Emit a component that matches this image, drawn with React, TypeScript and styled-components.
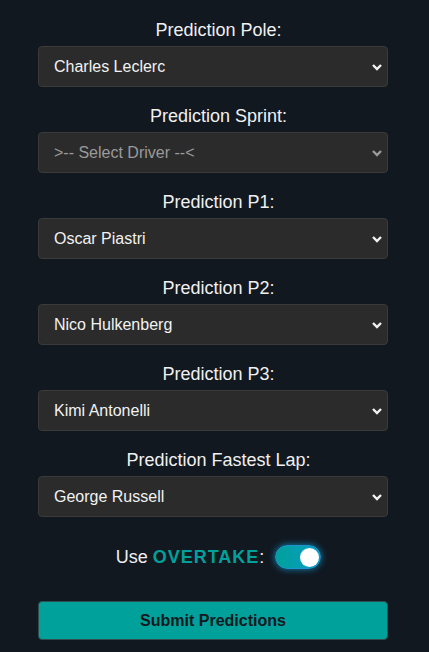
import React, { useState } from 'react';
import styled, { createGlobalStyle } from 'styled-components';

const GlobalStyle = createGlobalStyle`
  html, body {
    margin: 0;
    padding: 0;
    background-color: #111820;
    font-family: "Liberation Sans", Arial, sans-serif;
  }
`;

const Page = styled.div`
  min-height: 652px;
  box-sizing: border-box;
  padding: 20px 0 0 38px;
  background-color: #111820;
`;

const Form = styled.form`
  width: 361px;
  display: flex;
  flex-direction: column;
`;

const Group = styled.div`
  display: flex;
  flex-direction: column;
  margin-bottom: 19px;
`;

const Label = styled.label`
  display: block;
  text-align: center;
  font-size: 18px;
  line-height: 21px;
  color: #f0f0f0;
  margin-bottom: 5px;
`;

const SelectWrap = styled.div`
  position: relative;
  width: 350px;
`;

const Select = styled.select<{ $empty?: boolean }>`
  appearance: none;
  -webkit-appearance: none;
  width: 100%;
  height: 41px;
  box-sizing: border-box;
  padding: 0 15px;
  background-color: #2b2b2b;
  border: 1px solid #3a3a3a;
  border-radius: 4px;
  color: ${(p) => (p.$empty ? '#9a9a9a' : '#f2f2f2')};
  font-family: "Liberation Sans", Arial, sans-serif;
  font-size: 16px;
  outline: none;
`;

const Chevron = styled.svg`
  position: absolute;
  right: 5px;
  top: 50%;
  transform: translateY(-50%);
  pointer-events: none;
`;

const ToggleRow = styled.div`
  display: flex;
  align-items: center;
  justify-content: center;
  gap: 11px;
  margin-top: 9px;
  height: 24px;
`;

const ToggleText = styled.span`
  font-size: 18px;
  color: #f0f0f0;
`;

const Accent = styled.span`
  color: #00a19a;
  font-weight: bold;
  letter-spacing: 1px;
`;

const Track = styled.button<{ $on: boolean }>`
  position: relative;
  width: 46px;
  height: 24px;
  padding: 0;
  border: 1px solid #1b94cf;
  border-radius: 12px;
  background: ${(p) =>
    p.$on ? 'linear-gradient(90deg, #00a19a, #0a9cc6)' : '#444'};
  box-shadow: ${(p) => (p.$on ? '0 0 7px rgba(20, 170, 230, 0.75)' : 'none')};
  cursor: pointer;
`;

const Knob = styled.span<{ $on: boolean }>`
  position: absolute;
  top: 2px;
  left: ${(p) => (p.$on ? '24px' : '2px')};
  width: 19px;
  height: 19px;
  border-radius: 50%;
  background: #ffffff;
`;

const SubmitButton = styled.button`
  margin-top: 32px;
  width: 350px;
  height: 39px;
  background-color: #00a19a;
  border: 1px solid #2f4d4c;
  border-radius: 4px;
  color: #111820;
  font-family: "Liberation Sans", Arial, sans-serif;
  font-size: 16px;
  font-weight: bold;
  cursor: pointer;
`;

const drivers = [
  'Max Verstappen',
  'Lando Norris',
  'Oscar Piastri',
  'Charles Leclerc',
  'Lewis Hamilton',
  'George Russell',
  'Kimi Antonelli',
  'Nico Hulkenberg',
  'Fernando Alonso',
];

const fields = [
  { id: 'pole', label: 'Prediction Pole:', value: 'Charles Leclerc' },
  { id: 'sprint', label: 'Prediction Sprint:', value: '' },
  { id: 'p1', label: 'Prediction P1:', value: 'Oscar Piastri' },
  { id: 'p2', label: 'Prediction P2:', value: 'Nico Hulkenberg' },
  { id: 'p3', label: 'Prediction P3:', value: 'Kimi Antonelli' },
  { id: 'fastest', label: 'Prediction Fastest Lap:', value: 'George Russell' },
];

const DriverSelect: React.FC<{ id: string; initial: string }> = ({ id, initial }) => {
  const [value, setValue] = useState(initial);
  return (
    <SelectWrap>
      <Select id={id} value={value} $empty={!value} onChange={(e) => setValue(e.target.value)}>
        <option value="">&gt;-- Select Driver --&lt;</option>
        {drivers.map((d) => (
          <option key={d} value={d}>
            {d}
          </option>
        ))}
      </Select>
      <Chevron width="12" height="12" viewBox="0 0 12 12">
        <path d="M2 4 L6 8 L10 4" fill="none" stroke={value ? '#f2f2f2' : '#9a9a9a'} strokeWidth="2.4" />
      </Chevron>
    </SelectWrap>
  );
};

const App: React.FC = () => {
  const [overtake, setOvertake] = useState(true);

  return (
    <Page>
      <GlobalStyle />
      <Form onSubmit={(e) => e.preventDefault()}>
        {fields.map((f) => (
          <Group key={f.id}>
            <Label htmlFor={f.id}>{f.label}</Label>
            <DriverSelect id={f.id} initial={f.value} />
          </Group>
        ))}
        <ToggleRow>
          <ToggleText>
            Use <Accent>OVERTAKE</Accent>:
          </ToggleText>
          <Track type="button" $on={overtake} onClick={() => setOvertake(!overtake)}>
            <Knob $on={overtake} />
          </Track>
        </ToggleRow>
        <SubmitButton type="submit">Submit Predictions</SubmitButton>
      </Form>
    </Page>
  );
};

export default App;
